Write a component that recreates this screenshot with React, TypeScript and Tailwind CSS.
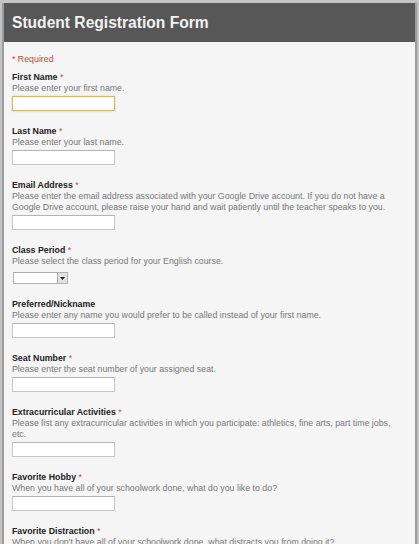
type Question = {
  label: string;
  required: boolean;
  help: string;
  kind: "text" | "select";
  focused?: boolean;
};

const questions: Question[] = [
  { label: "First Name", required: true, help: "Please enter your first name.", kind: "text", focused: true },
  { label: "Last Name", required: true, help: "Please enter your last name.", kind: "text" },
  {
    label: "Email Address",
    required: true,
    help: "Please enter the email address associated with your Google Drive account. If you do not have a Google Drive account, please raise your hand and wait patiently until the teacher speaks to you.",
    kind: "text",
  },
  { label: "Class Period", required: true, help: "Please select the class period for your English course.", kind: "select" },
  {
    label: "Preferred/Nickname",
    required: false,
    help: "Please enter any name you would prefer to be called instead of your first name.",
    kind: "text",
  },
  { label: "Seat Number", required: true, help: "Please enter the seat number of your assigned seat.", kind: "text" },
  {
    label: "Extracurricular Activities",
    required: true,
    help: "Please list any extracurricular activities in which you participate: athletics, fine arts, part time jobs, etc.",
    kind: "text",
  },
  {
    label: "Favorite Hobby",
    required: true,
    help: "When you have all of your schoolwork done, what do you like to do?",
    kind: "text",
  },
  {
    label: "Favorite Distraction",
    required: true,
    help: "When you don't have all of your schoolwork done, what distracts you from doing it?",
    kind: "text",
  },
];

function Field({ q }: { q: Question }) {
  return (
    <div className="flex flex-col">
      <p className="text-[8.8px] leading-[11px] font-bold text-[#222]">
        {q.label}
        {q.required && <span className="text-[#c4483c] font-normal"> *</span>}
      </p>
      <p className="text-[8.8px] leading-[11px] text-[#777]">{q.help}</p>
      {q.kind === "text" ? (
        <div
          className={`mt-[2px] h-[15px] w-[103px] bg-white border ${
            q.focused
              ? "border-[#d6b46a] shadow-[0_0_2px_#e8d29c]"
              : "border-[#c6c6c6] border-t-[#b4b4b4]"
          }`}
        />
      ) : (
        <div className="mt-[2px] h-[15px] flex items-end pl-[1px]">
          <div className="h-[12px] w-[55px] bg-white border border-[#b0b0b0] flex justify-end">
            <div className="w-[10px] h-full bg-[#e2e2e2] border-l border-[#a8a8a8] flex items-center justify-center">
              <svg width="5" height="3" viewBox="0 0 5 3">
                <path d="M0 0h5L2.5 3z" fill="#222" />
              </svg>
            </div>
          </div>
        </div>
      )}
    </div>
  );
}

export default function App() {
  return (
    <div className="min-h-screen bg-[#c4c4c4] pt-[3px] pl-[2px] font-['Liberation_Sans',Arial,sans-serif]">
      <div className="w-[415px] border-x-2 border-[#9c9c9c] bg-[#f5f5f5] pb-10">
        <div className="h-[39px] bg-[#575757] flex items-center pl-[8px]">
          <h1 className="text-[15.6px] font-bold text-[#f2f2f2]">Student Registration Form</h1>
        </div>
        <div className="pl-[8px] pr-[15px] pt-[11.5px]">
          <p className="text-[8.8px] leading-[11px] text-[#c4483c]">* Required</p>
          <div className="mt-[7.7px] flex flex-col gap-[15px]">
            {questions.map((q) => (
              <Field key={q.label} q={q} />
            ))}
          </div>
        </div>
      </div>
    </div>
  );
}
